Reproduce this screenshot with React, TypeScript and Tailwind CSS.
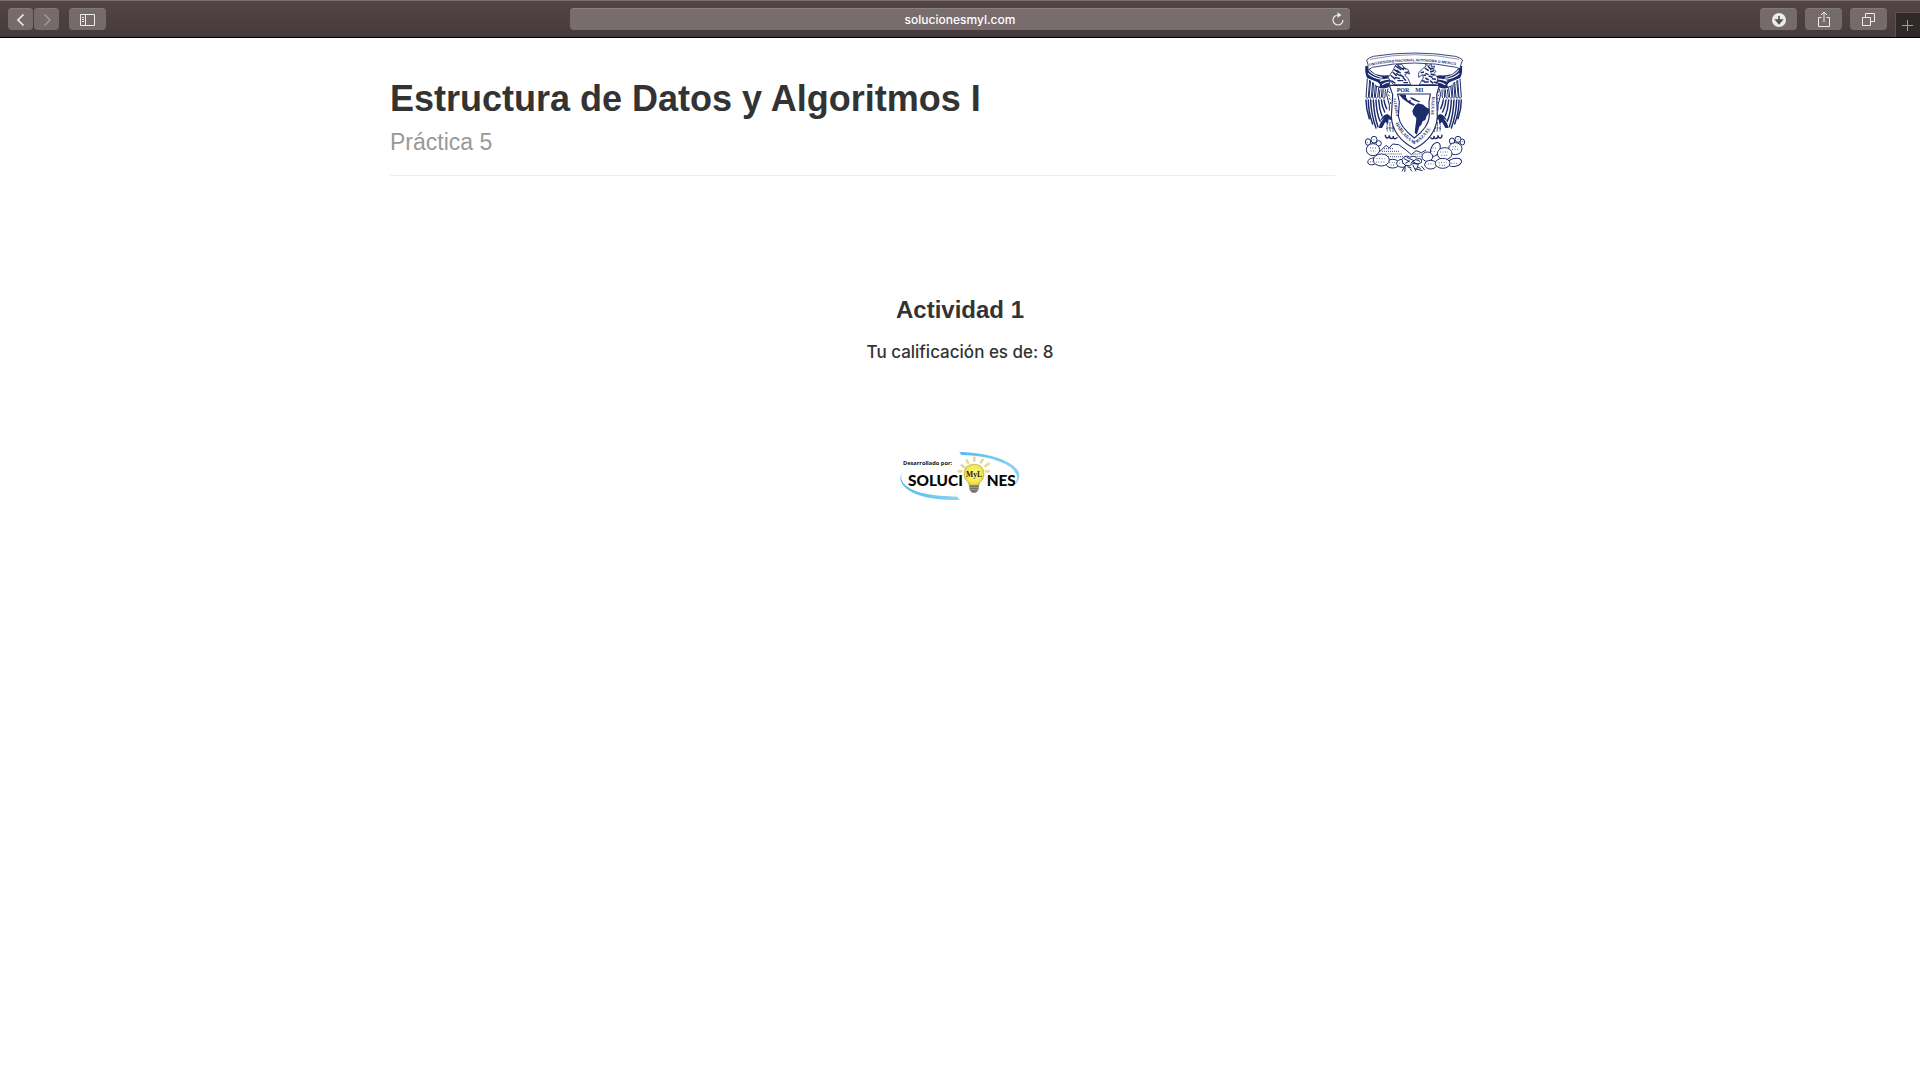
import React from "react";

const toolbarButton =
  "flex h-[22px] items-center justify-center rounded bg-[#766b6c] text-[#ececec] border-t border-[#837879]";

function Wing() {
  return (
    <g>
      {/* shoulder */}
      <path d="M16 54 Q14 78 22 90 L52 102 Q64 110 58 116 L46 112 Q60 128 86 118 L92 100 L108 92 Q100 84 84 82 Q56 84 42 76 Q30 66 22 54Z" fill="#1c2b6b" />
      <path d="M26 66 Q40 84 66 88 M24 76 Q40 92 70 94 M60 100 Q72 94 94 92 M66 110 Q76 104 88 102" stroke="#fff" strokeWidth="3.5" fill="none" />
      {/* short upper feathers */}
      <path d="M22 92 L18 148 Q22 154 25 148 L29 96 M32 98 L27 148 Q31 154 34 148 L38 102 M41 104 L37 148 Q40 154 43 148 L46 110 M50 114 L46 148 Q50 154 53 148 L56 120 M60 124 L57 148 Q60 154 64 148 L66 124 M70 124 L68 148 Q72 154 75 148 L76 124" fill="none" stroke="#1c2b6b" strokeWidth="3" />
      {/* long flight feathers */}
      <path d="M18 156 Q18 184 28 212 M25 156 Q25 194 38 228 M32 156 Q33 198 48 240 M40 156 Q42 202 54 236 M48 156 Q49 192 60 220 M56 156 Q58 184 66 204 M64 156 Q66 176 74 192 M72 156 Q74 170 80 182" fill="none" stroke="#1c2b6b" strokeWidth="4.4" strokeLinecap="round" />
      <path d="M84 122 Q76 140 84 156 Q90 170 88 188" fill="none" stroke="#1c2b6b" strokeWidth="3" />
      <path d="M86 130l4 5M84 140l5 4M87 150l4 5M90 162l3 6" stroke="#1c2b6b" strokeWidth="3" />
      {/* leg and talon */}
      <path d="M56 240 Q60 222 72 210 L60 220 Q68 200 82 198 Q94 204 98 218 L86 214 L84 228 L76 222 L66 240Z" fill="#1c2b6b" />
      <path d="M82 226 Q80 238 82 250 M90 222 Q89 238 91 252 M97 226 Q100 240 99 252 M80 240h20" fill="none" stroke="#1c2b6b" strokeWidth="3" strokeDasharray="5 2" />
      <path d="M76 260q0 10 6 10t6-8q0 10 6 10t6-8q0 10 6 8t6-4" fill="none" stroke="#1c2b6b" strokeWidth="4" />
    </g>
  );
}

function Emblem() {
  return (
    <svg viewBox="0 0 330 384" className="h-[128px] w-[110px] shrink-0" role="img" aria-label="Escudo universitario">
      <defs>
        <path id="banner" d="M28 54 Q163 25 308 56" />
        <path id="motto-left" d="M112 204 L102 140" />
        <path id="motto-top" d="M110 131 H222" />
        <path id="motto-right" d="M216 146 L212 208" />
        <path id="motto-base" d="M103 216 Q120 264 164 289 Q208 262 226 212" />
      </defs>
      <Wing />
      <g transform="translate(322 0) scale(-1 1)">
        <Wing />
      </g>

      {/* condor */}
      <path d="M84 88 Q100 68 102 60 L108 50 L126 50 L134 62 L144 64 L149 78 L143 76 L134 80 L144 92 L152 110 L100 110Z" fill="#fff" stroke="#1c2b6b" strokeWidth="2.5" />
      <path d="M106 54l18 12M112 52l20 14M102 64l14 10M110 66l12 10M98 72l12 12M108 76l14 8M92 82l14 12M104 88l16 4M120 80l12 8M112 98l18 0M128 88l10 10M94 98l12 8M130 104l14 0M128 60l10 2M134 74l12 -2" stroke="#1c2b6b" strokeWidth="4.2" />
      {/* eagle */}
      <path d="M178 110 L190 90 L188 80 L176 88 L176 74 L188 62 L198 54 L196 46 L206 54 L214 46 L214 56 L224 54 L220 64 L228 70 L222 76 L234 90 L228 110Z" fill="#fff" stroke="#1c2b6b" strokeWidth="2.5" />
      <path d="M194 60l12 8M204 54l10 12M182 74l10-2M196 76l10 4M210 72l12-4M206 84l12 4M196 90l10 6M212 78l12 4M216 92l12 2M192 102l14 0M210 98l10 8M186 98l8 2M222 102l8 2M214 60l6 2M190 82l8 0" stroke="#1c2b6b" strokeWidth="4.5" />

      {/* name ribbon */}
      <path d="M20 36 Q28 28 40 25 Q163 5 286 25 Q300 28 308 36 Q302 48 300 62 Q294 60 290 58 Q163 32 37 58 L24 66 Q26 48 20 36Z" fill="#fff" stroke="#1c2b6b" strokeWidth="2.6" />
      <path d="M30 34 Q163 6 298 34" fill="none" stroke="#1c2b6b" strokeWidth="1.5" />
      <text fill="#1c2b6b" fontFamily="'Liberation Sans Narrow', 'Liberation Sans', sans-serif" fontSize="11" fontWeight="700">
        <textPath href="#banner">UNIVERSIDAD NACIONAL AUTONOMA D MEXICO</textPath>
      </text>

      {/* shield */}
      <path d="M88 112 H238 L230 140 L232 206 Q228 268 164 302 Q98 268 94 206 L98 140Z" fill="#fff" stroke="#1c2b6b" strokeWidth="3.5" />
      <path d="M113 138 H211 L207 162 L208 204 Q206 238 163 270 Q120 238 115 204 L118 162Z" fill="#fff" stroke="#1c2b6b" strokeWidth="3.5" />
      <g fill="#1c2b6b" fontFamily="'Liberation Serif', serif" fontSize="14" fontWeight="700">
        <text fontSize="18"><textPath href="#motto-top">POR &#160; &#160;MI</textPath></text>
        <g transform="translate(4 0)"><text fontSize="12"><textPath href="#motto-left">ESPIRITV</textPath></text></g>
        <text fontSize="13"><textPath href="#motto-right">RAZA SE</textPath></text>
        <text><textPath href="#motto-base" startOffset="10">HABLARA MI RAZA EL</textPath></text>
      </g>

      {/* map */}
      <path d="M115 139 L138 140 L138 148 L144 158 L152 156 L152 162 L158 166 L166 170 L160 173 L150 168 L138 160 L128 152 L121 144Z M150 147 L160 150 L170 156 L180 160 L178 163 L166 159 L154 153Z" fill="#1c2b6b" />
      <path d="M166 172 L174 166 L190 170 L198 178 L208 183 L207 194 L200 204 L196 216 L188 220 L184 230 L178 236 L174 250 L170 260 L164 254 L166 236 L168 222 L169 210 L160 200 L157 190 L160 182Z" fill="#1c2b6b" />

      {/* volcanoes */}
      <path d="M58 312 L78 292 L88 300 L98 288 L116 290 L138 306 L154 320 M154 320 L168 308 L184 314 L198 306" fill="#fff" stroke="#1c2b6b" strokeWidth="3" />
      <path d="M72 302h28M66 310h52M74 318h54M84 326h50M160 318h36M166 326h30M170 334h24" stroke="#1c2b6b" strokeWidth="2.6" strokeDasharray="3 3" />
      {/* prickly pears */}
      <g fill="#fff" stroke="#1c2b6b" strokeWidth="3">
        <ellipse cx="24" cy="282" rx="8" ry="10" />
        <ellipse cx="42" cy="275" rx="9" ry="10" />
        <ellipse cx="56" cy="286" rx="8" ry="8" />
        <ellipse cx="39" cy="305" rx="20" ry="18" />
        <ellipse cx="38" cy="340" rx="15" ry="10" transform="rotate(-15 38 340)" />
        <ellipse cx="98" cy="347" rx="20" ry="13" />
        <ellipse cx="64" cy="336" rx="24" ry="18" />
        <ellipse cx="126" cy="346" rx="16" ry="12" />
        <ellipse cx="226" cy="304" rx="13" ry="22" transform="rotate(24 226 304)" />
        <ellipse cx="202" cy="326" rx="16" ry="14" />
        <ellipse cx="276" cy="279" rx="8" ry="9" />
        <ellipse cx="294" cy="274" rx="9" ry="9" />
        <ellipse cx="307" cy="282" rx="7" ry="9" />
        <ellipse cx="286" cy="302" rx="20" ry="18" />
        <ellipse cx="254" cy="317" rx="22" ry="18" />
        <ellipse cx="284" cy="343" rx="21" ry="12" transform="rotate(-12 284 343)" />
        <ellipse cx="212" cy="350" rx="18" ry="13" />
        <ellipse cx="248" cy="346" rx="22" ry="15" />
      </g>
      <path d="M30 300h18M32 309h16M50 332h24M48 342h28M88 344h20M92 351h14M118 346h16M218 300h12M214 310h12M240 312h24M244 322h18M278 296h16M276 304h20M236 344h24M238 352h20M274 346h20M204 348h16M22 282v6M42 274v6M294 272v4M308 280v4M30 341h14" stroke="#1c2b6b" strokeWidth="2.6" strokeDasharray="2.5 5" />
      {/* central bloom and roots */}
      <path d="M126 334 Q138 318 150 328 Q162 320 172 332 Q188 330 184 344 Q170 352 158 346 Q150 358 136 352 Q126 346 126 334Z" fill="#fff" stroke="#1c2b6b" strokeWidth="3" />
      <path d="M132 332l16 8M140 328l22 10M150 338l-14 8M152 346l16-12M166 334l14 6M156 340l20 10M126 370l12-20M136 358l-2 14M142 356l12 4M158 350l10 20M150 362l6 8M174 352l-4 12M182 362l-10-6M184 354l10 12M164 362l24 6" fill="none" stroke="#1c2b6b" strokeWidth="3" />
    </svg>
  );
}

function SolucionesLogo() {
  return (
    <svg viewBox="0 0 420 180" className="h-[60px] w-[140px]" role="img" aria-label="Desarrollado por Soluciones MyL">
      <defs>
        <radialGradient id="bulb" cx="50%" cy="45%" r="55%">
          <stop offset="0%" stopColor="#fff58c" />
          <stop offset="70%" stopColor="#f7e94e" />
          <stop offset="100%" stopColor="#d9c93f" />
        </radialGradient>
        <linearGradient id="sweep" x1="0" x2="1">
          <stop offset="0" stopColor="#4fbbec" />
          <stop offset="1" stopColor="#8fd3f2" />
        </linearGradient>
      </defs>
      <path d="M208 21 Q300 24 350 50 Q394 72 387 98 Q384 112 374 122 Q386 98 378 86 Q366 62 330 50 Q280 30 214 30Z" fill="url(#sweep)" />
      <path d="M38 80 Q24 104 50 124 Q90 154 202 155 L210 165 Q94 168 48 130 Q20 106 38 80Z" fill="url(#sweep)" />
      <path d="M253 38v9M230 46l4 7M278 44l-5 8M215 61l8 5M296 56l-10 7M206 79h8M288 79h8" stroke="#ead79a" strokeWidth="8" strokeLinecap="round" />
      <path d="M222 88 Q222 58 252 58 Q282 58 282 88 Q282 103 270 112 L266 122 H238 L234 112 Q222 103 222 88Z" fill="url(#bulb)" stroke="#b8ad55" strokeWidth="2" />
      <path d="M237 121h30l-2 14-7 8h-12l-7-8z" fill="#77736a" />
      <path d="M238 127h28M239 134h26" stroke="#b5b2a9" strokeWidth="2" />
      <text x="252" y="97" textAnchor="middle" fontFamily="'Liberation Serif', serif" fontSize="23" fontWeight="700" fill="#25241c">MyL</text>
      <text x="39" y="59" fontFamily="'Open Sans', sans-serif" fontSize="17" fontWeight="700" fill="#111">Desarrollado por:</text>
      <text x="54" y="123" fontFamily="Lato, sans-serif" fontSize="46" fontWeight="900" fill="#050505">SOLUCI</text>
      <text x="290" y="123" fontFamily="Lato, sans-serif" fontSize="46" fontWeight="900" fill="#050505">NES</text>
    </svg>
  );
}

function Toolbar() {
  return (
    <header className="grid h-[38px] grid-cols-[1fr_minmax(0,780px)_1fr] border-t border-b border-t-[#7b6e6f] border-b-black bg-linear-to-b from-[#534546] to-[#463a3b]">
      <nav className="flex items-center gap-2.5 pl-2" aria-label="Navegación">
        <div className="flex gap-px">
          <button className={`${toolbarButton} w-[25px]`} aria-label="Atrás">
            <svg viewBox="0 0 12 14" className="h-3.5 w-3" fill="none" stroke="currentColor" strokeWidth="1.7"><path d="M8.5 1.5 3 7l5.500 5.500" /></svg>
          </button>
          <button className={`${toolbarButton} w-[25px]`} aria-label="Adelante" disabled>
            <svg viewBox="0 0 12 14" className="h-3.5 w-3" fill="none" stroke="#a09798" strokeWidth="1.5"><path d="M3.500 1.500 9 7l-5.500 5.500" /></svg>
          </button>
        </div>
        <button className={`${toolbarButton} w-[37px]`} aria-label="Barra lateral">
          <svg viewBox="0 0 16 12" className="h-3 w-4" fill="none" stroke="currentColor"><path d="M.5.5h14v11H.5zM5.500.5v11M2 3.500h2M2 5.500h2M2 7.500h2" /></svg>
        </button>
      </nav>
      <div className="relative flex items-center">
        <input
          aria-label="Dirección"
          defaultValue="solucionesmyl.com"
          className="h-[22px] w-full rounded border-t border-[#8b8182] bg-[#786d6e] px-8 text-center font-['Inter'] text-xs font-medium text-white outline-none"
        />
        <button className="absolute right-1 flex h-5 w-4 items-center justify-center text-[#ececec]" aria-label="Recargar">
          <svg viewBox="0 0 12 14" className="h-3.5 w-3" fill="none" stroke="currentColor" strokeWidth="1.200"><path d="M6 3a5 5 0 1 0 5 5" /><path d="M5.500.3 9.500 3l-4 2.800z" fill="currentColor" stroke="none" /></svg>
        </button>
      </div>
      <div className="flex items-center justify-end gap-2">
        <button className={`${toolbarButton} w-[37px]`} aria-label="Descargas">
          <svg viewBox="0 0 14 14" className="size-3.5"><circle cx="7" cy="7" r="7" fill="currentColor" /><path d="M7 3v6M4 7l3 3.500L10 7z" stroke="#5d5253" strokeWidth="1.600" fill="#5d5253" /></svg>
        </button>
        <button className={`${toolbarButton} w-[37px]`} aria-label="Compartir">
          <svg viewBox="0 0 12 16" className="mb-0.5 h-4 w-3" fill="none" stroke="currentColor"><path d="M3.500 6.500h-3v9h11v-9h-3M6 11V1M3 4l3-3 3 3" /></svg>
        </button>
        <button className={`${toolbarButton} w-[37px]`} aria-label="Pestañas">
          <svg viewBox="0 0 13 13" className="size-[13px]" fill="none" stroke="currentColor"><path d="M.5 4.500h8v8h-8zM3.500 4.500v-4h9v8h-4" /></svg>
        </button>
        <button className="flex h-[25px] w-[25px] items-center justify-center self-end border-t border-l border-[#5e5354] bg-[#312829] pr-0.5 text-[#a39a9b]" aria-label="Nueva pestaña">
          <svg viewBox="0 0 11 11" className="size-[11px]" stroke="currentColor"><path d="M5.500 0v11M0 5.500h11" /></svg>
        </button>
      </div>
    </header>
  );
}

export default function App() {
  return (
    <div className="min-h-screen bg-white font-['Liberation_Sans',Arial,sans-serif] text-[#333]">
      <Toolbar />
      <main className="mx-auto max-w-[1170px] px-[15px]">
        <div className="flex items-start gap-[25px] pt-2.5">
          <div className="mt-[30px] max-w-[945px] flex-1 border-b border-[#eee] pb-[17px]">
            <h1 className="text-4xl leading-[42px] font-bold">Estructura de Datos y Algoritmos I</h1>
            <p className="mt-1.5 text-[23px] leading-8 text-[#999]">Práctica 5</p>
          </div>
          <Emblem />
        </div>
        <section className="mt-[120px] text-center">
          <h2 className="text-2xl leading-7 font-bold">Actividad 1</h2>
          <p className="mt-4 font-['Inter'] text-[17px] leading-6 font-medium">Tu calificación es de: 8</p>
        </section>
        <footer className="mt-[81px] flex justify-center">
          <SolucionesLogo />
        </footer>
      </main>
    </div>
  );
}
